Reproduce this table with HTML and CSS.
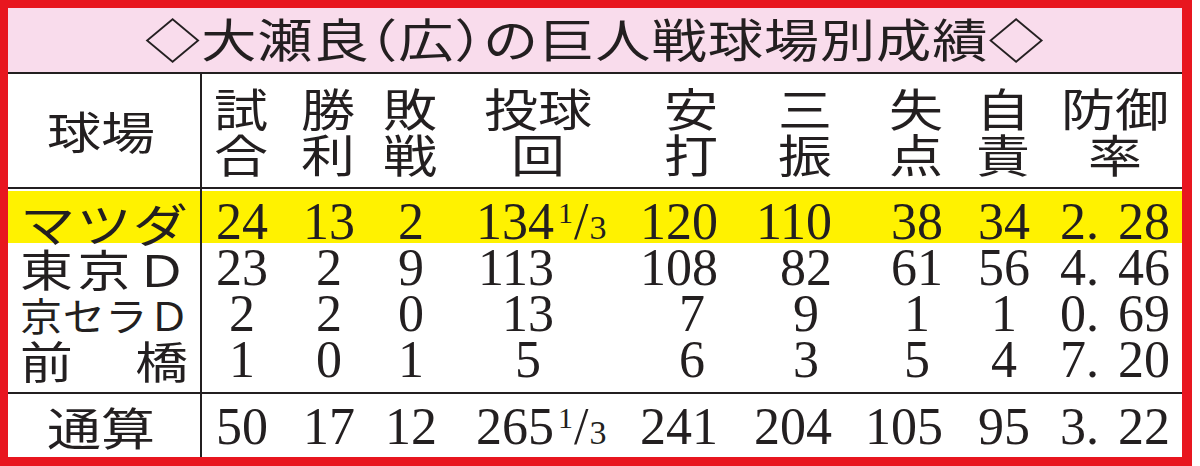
FILE: index.html
```html
<!DOCTYPE html>
<html lang="ja">
<head>
<meta charset="utf-8">
<title>大瀬良の巨人戦球場別成績</title>
<link rel="stylesheet" href="styles.css">
</head>
<body>
<div class="frame">
  <div class="title"><span class="t">◇大瀬良<span class="hw">（</span>広<span class="hw">）</span>の巨人戦球場別成績◇</span></div>

  <div class="row head">
    <div class="c0"><span class="jp">球場</span></div>
    <div><span class="jp">試<br>合</span></div>
    <div><span class="jp">勝<br>利</span></div>
    <div><span class="jp">敗<br>戦</span></div>
    <div class="hp4"><span class="jp">投球<br>回</span></div>
    <div><span class="jp">安<br>打</span></div>
    <div><span class="jp">三<br>振</span></div>
    <div><span class="jp">失<br>点</span></div>
    <div><span class="jp">自<br>責</span></div>
    <div class="hp9"><span class="jp">防御<br>率</span></div>
  </div>

  <div class="row r hl">
    <div class="c0"><span class="lab l-mazda">マツダ</span></div>
    <div class="n">24</div>
    <div class="n">13</div>
    <div class="n s">2</div>
    <div class="n">134<span class="fr"><span class="fn">1</span><span class="fs">/</span><span class="fd">3</span></span></div>
    <div class="n">120</div>
    <div class="n">110</div>
    <div class="n">38</div>
    <div class="n">34</div>
    <div class="n era">2. 28</div>
  </div>

  <div class="row r">
    <div class="c0"><span class="lab l-std">東京Ｄ</span></div>
    <div class="n">23</div>
    <div class="n s">2</div>
    <div class="n s">9</div>
    <div class="n ip">113</div>
    <div class="n">108</div>
    <div class="n">82</div>
    <div class="n">61</div>
    <div class="n">56</div>
    <div class="n era">4. 46</div>
  </div>

  <div class="row r">
    <div class="c0"><span class="lab l-kyo">京セラＤ</span></div>
    <div class="n s">2</div>
    <div class="n s">2</div>
    <div class="n s">0</div>
    <div class="n ip">13</div>
    <div class="n s">7</div>
    <div class="n s">9</div>
    <div class="n s">1</div>
    <div class="n s">1</div>
    <div class="n era">0. 69</div>
  </div>

  <div class="row r last">
    <div class="c0"><span class="lab l-std">前　橋</span></div>
    <div class="n s">1</div>
    <div class="n s">0</div>
    <div class="n s">1</div>
    <div class="n ip s4">5</div>
    <div class="n s">6</div>
    <div class="n s">3</div>
    <div class="n s">5</div>
    <div class="n s">4</div>
    <div class="n era">7. 20</div>
  </div>

  <div class="row total">
    <div class="c0 ctr"><span class="jp">通算</span></div>
    <div class="n">50</div>
    <div class="n">17</div>
    <div class="n">12</div>
    <div class="n">265<span class="fr"><span class="fn">1</span><span class="fs">/</span><span class="fd">3</span></span></div>
    <div class="n">241</div>
    <div class="n">204</div>
    <div class="n">105</div>
    <div class="n">95</div>
    <div class="n era">3. 22</div>
  </div>
</div>
</body>
</html>
```

FILE: styles.css
```css
* {
  box-sizing: border-box;
  margin: 0;
  padding: 0;
}

html, body {
  background: #ffffff;
}

body {
  width: 1200px;
  height: 466px;
  overflow: hidden;
  color: #231f20;
  font-family: "Noto Sans CJK JP", "Noto Sans", sans-serif;
}

.frame {
  width: 1192px;
  height: 466px;
  border: 8px solid #e8161f;
  border-right-width: 10px;
  border-bottom-width: 9px;
  display: flex;
  flex-direction: column;
  background: #ffffff;
}

/* title bar */
.title {
  height: 66px;
  flex: none;
  background: #f9dcec;
  border-bottom: 2px solid #231f20;
  text-align: center;
  font-size: 46px;
  line-height: 59px;
  padding-bottom: 5px;
  white-space: nowrap;
}

.title .t {
  display: inline-block;
  transform: scaleX(1.2);
  letter-spacing: 0.8px;
}

.hw {
  font-feature-settings: "halt";
}

/* rows */
.row {
  display: grid;
  grid-template-columns: 194px 66px 87px 82px 175px 106px 114px 111px 87px 152px;
  flex: none;
}

.c0 {
  border-right: 2px solid #231f20;
}

/* header */
.head {
  height: 115px;
  border-bottom: 2px solid #231f20;
}

.head > div {
  display: flex;
  align-items: center;
  justify-content: flex-end;
  font-size: 45px;
  line-height: 46px;
}

.head .c0 {
  justify-content: center;
  padding-right: 5px;
}

.jp {
  display: inline-block;
  text-align: center;
  white-space: nowrap;
  transform: scaleX(1.2);
  transform-origin: right center;
}

.head .c0 .jp,
.total .c0 .jp {
  transform-origin: center center;
}

.hp4 {
  padding-right: 20px;
}

.hp9 {
  padding-right: 13px;
}

/* body rows */
.r > div {
  height: 46px;
}

.hl {
  background: linear-gradient(#ffffff 0 2px, #fff200 2px 54px, #ffffff 54px);
}

.hl > div {
  height: 56px;
  padding-top: 10px;
}

.last > div {
  height: 55px;
}

.r .c0 {
  line-height: 46px;
  white-space: nowrap;
}

.lab {
  display: inline-block;
  margin-left: 12px;
  transform-origin: left center;
}

.l-mazda {
  font-size: 46px;
  letter-spacing: 1px;
  transform: scaleX(1.2);
}

.l-std {
  font-size: 44px;
  letter-spacing: 4px;
  transform: scaleX(1.2);
}

.l-kyo {
  font-size: 39px;
  letter-spacing: 0.5px;
  transform: scaleX(1.08);
}

/* numbers */
.n {
  font-family: "Liberation Serif", "Times New Roman", serif;
  font-size: 52px;
  line-height: 46px;
  text-align: right;
  white-space: nowrap;
}

.s {
  padding-right: 13px;
}

.ip {
  padding-right: 58px;
}

.ip.s4 {
  padding-right: 71px;
}

.era {
  padding-right: 12px;
  word-spacing: 6px;
}

.fr {
  display: inline-block;
  width: 58px;
  text-align: left;
}

.fn {
  font-size: 30px;
  line-height: 0;
  vertical-align: 16px;
  margin-left: 4px;
}

.fs {
  line-height: 0;
  margin: 0 1px 0 1px;
}

.fd {
  font-size: 34px;
  line-height: 0;
}

/* total row */
.total {
  border-top: 2px solid #231f20;
}

.total > div {
  height: 63px;
  padding-top: 10px;
}

.total .c0 {
  font-size: 45px;
  line-height: 46px;
  text-align: center;
  padding-right: 5px;
}
```
